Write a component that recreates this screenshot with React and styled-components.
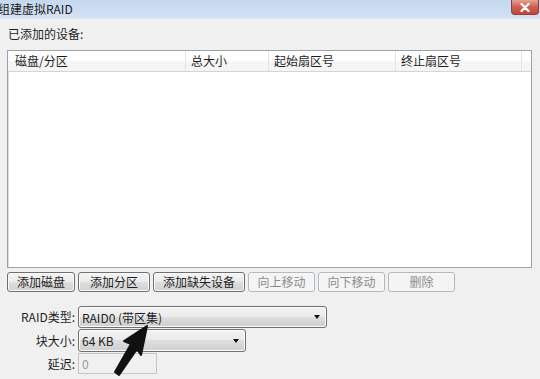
import React from "react";
import styled, { createGlobalStyle } from "styled-components";

const Global = createGlobalStyle`
  html, body { margin: 0; padding: 0; background: #f0f0f0; }
  body { font-family: "Noto Sans CJK SC", "Microsoft YaHei", "Noto Sans", sans-serif; font-size: 12px; color: #1e1e1e; }
`;

const Window = styled.div`
  position: relative;
  width: 540px;
  height: 379px;
  overflow: hidden;
  background: #f0f0f0;
  display: flex;
  flex-direction: column;
`;

const TitleBar = styled.div`
  height: 18px;
  flex: none;
  display: flex;
  align-items: flex-start;
  justify-content: space-between;
  background: linear-gradient(#c6d8ee, #d3e1f3);
  border-bottom: 1px solid #dfe6ef;
`;

const Title = styled.div`
  margin-left: -2px;
  line-height: 18px;
  font-size: 12px;
  color: #1a1a1a;
`;

const CloseBtn = styled.div`
  width: 28px;
  height: 15px;
  margin-right: 1px;
  border: 1px solid #9a3b3b;
  border-top: none;
  border-radius: 0 0 4px 4px;
  background: linear-gradient(#e3a393, #cf5e4e 50%, #c2473a);
  display: flex;
  align-items: center;
  justify-content: center;
  box-sizing: border-box;
`;

const Content = styled.div`
  padding: 7px 8px 0 7px;
  display: flex;
  flex-direction: column;
`;

const Caption = styled.div`
  line-height: 16px;
  padding-left: 1px;
`;

const List = styled.div`
  margin-top: 8px;
  width: 525px;
  height: 218px;
  box-sizing: border-box;
  border: 1px solid #9da2a8;
  box-shadow: inset 1px 1px 0 #d8dbe0;
  background: #fff;
  display: flex;
  flex-direction: column;
`;

const Header = styled.div`
  height: 21px;
  display: flex;
  border-bottom: 1px solid #d5d5d5;
  background: linear-gradient(#ffffff 45%, #f4f5f7 55%, #f4f5f7);
  box-sizing: border-box;
`;

const HeadCell = styled.div`
  width: ${(p) => p.w}px;
  flex: ${(p) => (p.fill ? "1" : "none")};
  padding-left: ${(p) => p.pl}px;
  box-sizing: border-box;
  line-height: 20px;
  border-right: ${(p) => (p.fill ? "none" : "1px solid #e2e3e5")};
  color: #1e1e1e;
  white-space: nowrap;
`;

const ButtonRow = styled.div`
  margin-top: 4px;
  display: flex;
  gap: 3px;
`;

const Button = styled.div`
  width: ${(p) => p.w}px;
  height: 20px;
  box-sizing: border-box;
  border: 1px solid ${(p) => (p.disabled ? "#b4b8bb" : "#707070")};
  border-radius: 3px;
  background: ${(p) =>
    p.disabled ? "#f4f4f4" : "linear-gradient(#f4f4f4, #ebebeb 50%, #dddddd 50%, #d3d3d3)"};
  color: ${(p) => (p.disabled ? "#8c8c8c" : "#1e1e1e")};
  box-shadow: inset 0 0 0 1px ${(p) => (p.disabled ? "#f8f8f8" : "#fafafa")};
  display: flex;
  align-items: center;
  justify-content: center;
  line-height: 1;
`;

const Form = styled.div`
  margin-top: 14px;
  display: grid;
  grid-template-columns: 68px auto;
  column-gap: 3px;
  row-gap: 1px;
  align-items: center;
  justify-items: start;
`;

const Label = styled.div`
  justify-self: end;
  line-height: 16px;
`;

const Select = styled.div`
  width: ${(p) => p.w}px;
  height: ${(p) => p.h}px;
  box-sizing: border-box;
  border: 1px solid #707070;
  border-radius: 3px;
  background: linear-gradient(#f2f2f2, #ebebeb 50%, #dddddd 50%, #cfcfcf);
  box-shadow: inset 0 0 0 1px #fbfbfb;
  display: flex;
  align-items: center;
  justify-content: space-between;
  padding: 0 6px 0 3px;
`;

const Caret = styled.div`
  width: 0;
  height: 0;
  border-left: 3.5px solid transparent;
  border-right: 3.5px solid transparent;
  border-top: 4px solid #111;
`;

const Input = styled.div`
  width: 79px;
  height: 21px;
  box-sizing: border-box;
  border: 1px solid #c3c5c8;
  background: #f0f0f0;
  color: #9a9a9a;
  padding-left: 3px;
  display: flex;
  align-items: center;
`;

const ArrowOverlay = styled.svg`
  position: absolute;
  left: 110px;
  top: 320px;
  pointer-events: none;
`;

export default function App() {
  return (
    <>
      <Global />
      <Window>
        <TitleBar>
          <Title>组建虚拟RAID</Title>
          <CloseBtn>
            <svg width="10" height="9" viewBox="0 0 10 9">
              <path d="M1.5 1 L8.5 8 M8.5 1 L1.5 8" stroke="#fff" strokeWidth="2.2" strokeLinecap="round" />
            </svg>
          </CloseBtn>
        </TitleBar>
        <Content>
          <Caption>已添加的设备:</Caption>
          <List>
            <Header>
              <HeadCell w={178} pl={7}>磁盘/分区</HeadCell>
              <HeadCell w={83} pl={5}>总大小</HeadCell>
              <HeadCell w={127} pl={5}>起始扇区号</HeadCell>
              <HeadCell w={126} pl={5}>终止扇区号</HeadCell>
              <HeadCell fill pl={0} />
            </Header>
          </List>
          <ButtonRow>
            <Button w={68}>添加磁盘</Button>
            <Button w={72}>添加分区</Button>
            <Button w={92}>添加缺失设备</Button>
            <Button w={67} disabled>向上移动</Button>
            <Button w={67} disabled>向下移动</Button>
            <Button w={67} disabled>删除</Button>
          </ButtonRow>
          <Form>
            <Label>RAID类型:</Label>
            <Select w={249} h={22}>
              <span>RAID0 (带区集)</span>
              <Caret />
            </Select>
            <Label>块大小:</Label>
            <Select w={168} h={23}>
              <span>64 KB</span>
              <Caret />
            </Select>
            <Label>延迟:</Label>
            <Input>0</Input>
          </Form>
        </Content>
        <ArrowOverlay width="50" height="60" viewBox="0 0 50 60">
          <path
            d="M37 6 L14 21 L21 24 L5 52 L9 55 L27 29 L31 35 Z"
            fill="#111"
            stroke="#111"
            strokeWidth="2"
            strokeLinejoin="round"
          />
        </ArrowOverlay>
      </Window>
    </>
  );
}
